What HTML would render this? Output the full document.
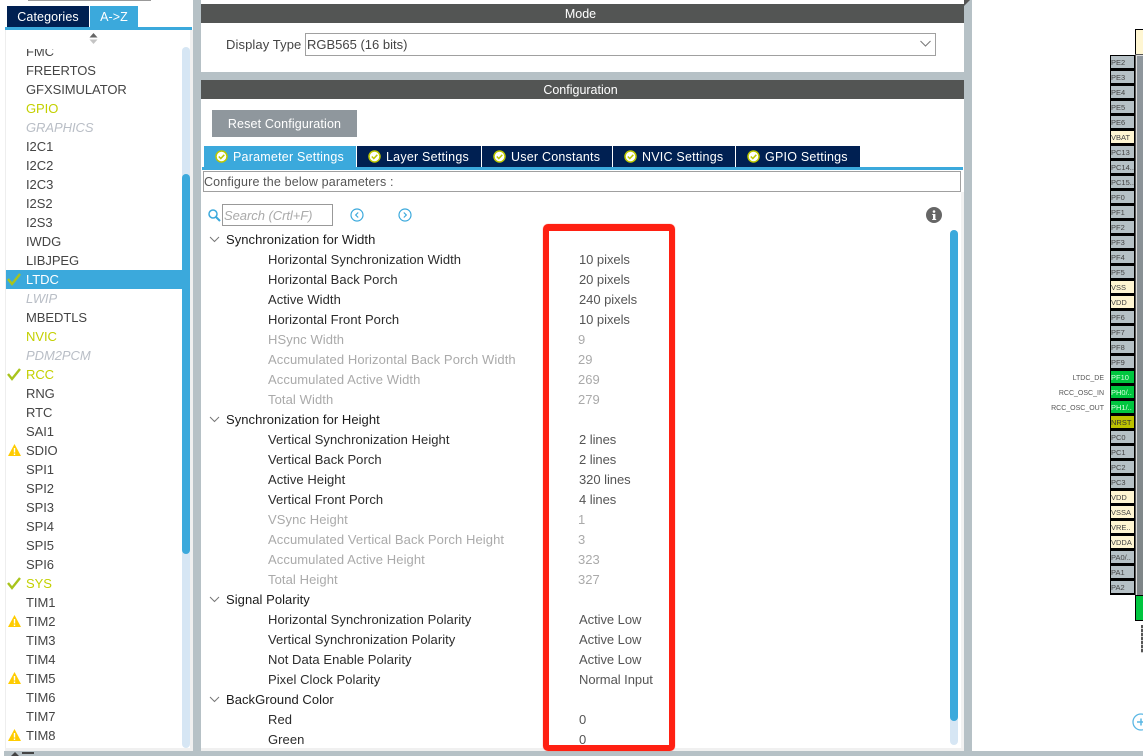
<!DOCTYPE html>
<html><head><meta charset="utf-8"><style>
html,body{margin:0;padding:0}
body{position:relative;width:1143px;height:756px;overflow:hidden;background:#fff;font-family:"Liberation Sans",sans-serif;font-size:13px;color:#333}
div,svg{position:absolute}
.l{left:26px;height:19px;line-height:19px;white-space:pre;color:#444;letter-spacing:-.05px}
.y{color:#c3d000}
.g{color:#b9bec6;font-style:italic}
.h{left:226px;line-height:20px;height:20px;color:#1c1c1c;white-space:pre;letter-spacing:.05px}
.p{left:268px;line-height:20px;height:20px;color:#2c2c2c;white-space:pre;letter-spacing:.05px}
.d{left:268px;line-height:20px;height:20px;color:#aaa;white-space:pre;letter-spacing:.09px}
.v{left:579px;line-height:20px;height:20px;color:#555;white-space:pre;letter-spacing:-.05px}
.w{left:578px;line-height:20px;height:20px;color:#aaa;white-space:pre}
.t{top:146px;height:21px;line-height:22px;background:#002052;color:#fff;white-space:pre;letter-spacing:.22px;font-size:12.5px}
.t span{position:absolute;left:29px;top:0}
.t svg{left:11px;top:4px}
.n{left:1110px;width:23px;height:12px;border:1px solid #000;border-bottom-width:2px;background:#b6c1c6;font-size:7.5px;line-height:14px;color:#444;white-space:pre;overflow:hidden}
.n.c{background:#fff6d2}
.n.e{background:#00c63f;color:#d8ffe0}
.n.o{background:#bdc200;color:#333}
.o1{font-size:7px;color:#555;white-space:pre;text-align:right;right:39px;line-height:10px}
</style></head><body>

<!-- backgrounds -->
<div style="left:193px;top:0;width:8px;height:756px;background:#b6c1c6"></div>
<div style="left:964px;top:0;width:8px;height:756px;background:#b6c1c6"></div>
<div style="left:4px;top:751px;width:1139px;height:5px;background:#b6c1c6"></div>
<div style="left:201px;top:72px;width:763px;height:8px;background:#b6c1c6"></div>
<div style="left:28px;top:0;width:123px;height:1px;background:#999"></div>

<!-- left panel -->
<div style="left:5px;top:30px;width:1px;height:721px;background:#eee"></div>
<div style="left:190px;top:30px;width:3px;height:721px;background:#f0f0f0"></div>
<div style="left:5px;top:748px;width:188px;height:3px;background:#f0f0f0"></div>
<div style="left:7px;top:6px;width:82px;height:21px;background:#002052;color:#fff;line-height:22px;text-align:center;font-size:12.5px;letter-spacing:.1px">Categories</div>
<div style="left:90px;top:6px;width:48px;height:21px;background:#3ba9dc;color:#fff;line-height:22px;text-align:center;font-size:12.5px;letter-spacing:.1px">A-&gt;Z</div>
<div style="left:5px;top:27px;width:187px;height:3px;background:#3ba9dc"></div>
<svg style="left:88px;top:32px" width="12" height="13"><path d="M1.500 5.500L5.500 1L9.500 5.500Z" fill="#666"/><path d="M1.500 7.500L5.500 12L9.500 7.500Z" fill="#c4c4c4"/></svg>
<div style="left:182px;top:47px;width:8px;height:701px;background:#d6e6f4;border-radius:4px"></div>
<div style="left:182px;top:174px;width:8px;height:380px;background:#3ba9dc;border-radius:4px"></div>
<div style="left:6px;top:270px;width:176px;height:19px;background:#3ba9dc"></div>
<div style="left:6px;top:49px;width:176px;height:699px;overflow:hidden">
<div style="left:-6px;top:-49px;width:188px;height:760px">
<div class="l" style="top:42px">FMC</div>
<div class="l" style="top:61px">FREERTOS</div>
<div class="l" style="top:80px">GFXSIMULATOR</div>
<div class="l y" style="top:99px">GPIO</div>
<div class="l g" style="top:118px">GRAPHICS</div>
<div class="l" style="top:137px">I2C1</div>
<div class="l" style="top:156px">I2C2</div>
<div class="l" style="top:175px">I2C3</div>
<div class="l" style="top:194px">I2S2</div>
<div class="l" style="top:213px">I2S3</div>
<div class="l" style="top:232px">IWDG</div>
<div class="l" style="top:251px">LIBJPEG</div>
<div class="l" style="top:270px;color:#fff">LTDC</div>
<div class="l g" style="top:289px">LWIP</div>
<div class="l" style="top:308px">MBEDTLS</div>
<div class="l y" style="top:327px">NVIC</div>
<div class="l g" style="top:346px">PDM2PCM</div>
<div class="l y" style="top:365px">RCC</div>
<div class="l" style="top:384px">RNG</div>
<div class="l" style="top:403px">RTC</div>
<div class="l" style="top:422px">SAI1</div>
<div class="l" style="top:441px">SDIO</div>
<div class="l" style="top:460px">SPI1</div>
<div class="l" style="top:479px">SPI2</div>
<div class="l" style="top:498px">SPI3</div>
<div class="l" style="top:517px">SPI4</div>
<div class="l" style="top:536px">SPI5</div>
<div class="l" style="top:555px">SPI6</div>
<div class="l y" style="top:574px">SYS</div>
<div class="l" style="top:593px">TIM1</div>
<div class="l" style="top:612px">TIM2</div>
<div class="l" style="top:631px">TIM3</div>
<div class="l" style="top:650px">TIM4</div>
<div class="l" style="top:669px">TIM5</div>
<div class="l" style="top:688px">TIM6</div>
<div class="l" style="top:707px">TIM7</div>
<div class="l" style="top:726px">TIM8</div>
</div></div>
<svg style="left:0;top:0;pointer-events:none" width="26" height="756">
<g fill="none" stroke="#a9c41c" stroke-width="2.400"><path d="M8 279L12 284L20 274"/><path d="M8 374L12 379L20 369"/><path d="M8 583L12 588L20 578"/></g>
<g fill="#fc0"><path d="M14.500 444L21 456H8Z"/><path d="M14.500 615L21 627H8Z"/><path d="M14.500 672L21 684H8Z"/><path d="M14.500 729L21 741H8Z"/></g>
<g stroke="#fff" stroke-width="1.400"><path d="M14.500 448V452.500M14.500 453.500V455"/><path d="M14.500 619V623.500M14.500 624.500V626"/><path d="M14.500 676V680.500M14.500 681.500V683"/><path d="M14.500 733V737.500M14.500 738.500V740"/></g>
</svg>
<svg style="left:8px;top:751px" width="30" height="5"><path d="M3 5L7 1L11 5Z" fill="#444"/><rect x="14" y="1" width="12" height="2" fill="#444"/></svg>

<!-- Mode -->
<div style="left:201px;top:4px;width:763px;height:19px;background:#535554"></div>
<div style="left:201px;top:4px;width:759px;height:19px;color:#fff;text-align:center;line-height:20px;font-size:12.5px">Mode</div>
<div style="left:226px;top:35px;line-height:20px;color:#444;letter-spacing:.1px;white-space:pre">Display Type</div>
<div style="left:305px;top:33px;width:629px;height:21px;border:1px solid #a0a0a0;background:#fff"></div>
<div style="left:307px;top:35px;line-height:20px;color:#444;white-space:pre">RGB565 (16 bits)</div>
<svg style="left:919px;top:39px" width="14" height="10"><path d="M1.500 2L6.500 7L11.500 2" fill="none" stroke="#777" stroke-width="1"/></svg>
<svg style="left:964px;top:0" width="8" height="6"><path d="M0 0H6L0 6Z" fill="#555"/></svg>

<!-- Configuration -->
<div style="left:201px;top:80px;width:763px;height:19px;background:#535554"></div>
<div style="left:201px;top:80px;width:759px;height:19px;color:#fff;text-align:center;line-height:20px;font-size:12.5px">Configuration</div>
<div style="left:212px;top:110px;width:145px;height:27px;background:#8f979d;color:#fff;text-align:center;line-height:28px;font-size:12.5px;letter-spacing:.15px">Reset Configuration</div>

<div class="t" style="left:204px;width:152px;background:#3ba9dc"><svg width="13" height="13"><circle cx="6.500" cy="6.500" r="5.500" fill="#fff" stroke="#bdc800" stroke-width="1.500"/><path d="M3.800 6.500L5.800 8.500L9.300 4.800" fill="none" stroke="#bdc800" stroke-width="1.500"/></svg><span>Parameter Settings</span></div>
<div class="t" style="left:357px;width:124px"><svg width="13" height="13"><circle cx="6.500" cy="6.500" r="5.500" fill="#fff" stroke="#bdc800" stroke-width="1.500"/><path d="M3.800 6.500L5.800 8.500L9.300 4.800" fill="none" stroke="#bdc800" stroke-width="1.500"/></svg><span>Layer Settings</span></div>
<div class="t" style="left:482px;width:130px"><svg width="13" height="13"><circle cx="6.500" cy="6.500" r="5.500" fill="#fff" stroke="#bdc800" stroke-width="1.500"/><path d="M3.800 6.500L5.800 8.500L9.300 4.800" fill="none" stroke="#bdc800" stroke-width="1.500"/></svg><span>User Constants</span></div>
<div class="t" style="left:613px;width:122px"><svg width="13" height="13"><circle cx="6.500" cy="6.500" r="5.500" fill="#fff" stroke="#bdc800" stroke-width="1.500"/><path d="M3.800 6.500L5.800 8.500L9.300 4.800" fill="none" stroke="#bdc800" stroke-width="1.500"/></svg><span>NVIC Settings</span></div>
<div class="t" style="left:736px;width:124px"><svg width="13" height="13"><circle cx="6.500" cy="6.500" r="5.500" fill="#fff" stroke="#bdc800" stroke-width="1.500"/><path d="M3.800 6.500L5.800 8.500L9.300 4.800" fill="none" stroke="#bdc800" stroke-width="1.500"/></svg><span>GPIO Settings</span></div>
<div style="left:202px;top:167px;width:761px;height:3px;background:#3ba9dc"></div>
<div style="left:203px;top:171px;width:756px;height:19px;border:1px solid #a0a0a0;line-height:20px;color:#555;letter-spacing:.15px;font-size:12.5px;white-space:pre">Configure the below parameters :</div>
<div style="left:961px;top:192px;width:3px;height:559px;background:#f2f2f2"></div>
<div style="left:201px;top:748px;width:763px;height:3px;background:#f0f0f0"></div>

<svg style="left:207px;top:208px" width="15" height="15"><circle cx="6" cy="6" r="4" fill="none" stroke="#3ba9dc" stroke-width="1.500"/><path d="M9 9L13 13" stroke="#3ba9dc" stroke-width="2"/></svg>
<div style="left:222px;top:204px;width:109px;height:20px;border:1px solid #999"></div>
<div style="left:224px;top:206px;line-height:20px;color:#aaa;font-style:italic;white-space:pre;letter-spacing:-.05px">Search (Crtl+F)</div>
<svg style="left:350px;top:208px" width="14" height="14"><circle cx="7" cy="7" r="6" fill="none" stroke="#3ba9dc" stroke-width="1.200"/><path d="M8.200 4.500L5.700 7L8.200 9.500" fill="none" stroke="#3ba9dc" stroke-width="1.200"/></svg>
<svg style="left:398px;top:208px" width="14" height="14"><circle cx="7" cy="7" r="6" fill="none" stroke="#3ba9dc" stroke-width="1.200"/><path d="M5.800 4.500L8.300 7L5.800 9.500" fill="none" stroke="#3ba9dc" stroke-width="1.200"/></svg>
<svg style="left:926px;top:207px" width="16" height="16"><circle cx="8" cy="8" r="8" fill="#666"/><rect x="7" y="7" width="2.400" height="5.500" fill="#fff"/><rect x="6.200" y="7" width="2" height="1" fill="#fff"/><rect x="6.200" y="12" width="4" height="1" fill="#fff"/><circle cx="8" cy="4.500" r="1.300" fill="#fff"/></svg>

<div style="left:950px;top:230px;width:8px;height:515px;background:#d6e6f4;border-radius:4px"></div>
<div style="left:950px;top:230px;width:8px;height:491px;background:#3ba9dc;border-radius:4px"></div>

<!-- chevrons -->
<svg style="left:207px;top:230px" width="14" height="480"><g fill="none" stroke="#777" stroke-width="1"><path d="M3 7L7.500 11.500L12 7"/><path d="M3 187L7.500 191.500L12 187"/><path d="M3 367L7.500 371.500L12 367"/><path d="M3 467L7.500 471.500L12 467"/></g></svg>

<!-- params -->
<div style="left:201px;top:229px;width:749px;height:519px;overflow:hidden"><div style="left:-201px;top:-228px;width:800px;height:760px">
<div class="h" style="top:229px">Synchronization for Width</div>
<div class="p" style="top:249px">Horizontal Synchronization Width</div><div class="v" style="top:249px">10 pixels</div>
<div class="p" style="top:269px">Horizontal Back Porch</div><div class="v" style="top:269px">20 pixels</div>
<div class="p" style="top:289px">Active Width</div><div class="v" style="top:289px">240 pixels</div>
<div class="p" style="top:309px">Horizontal Front Porch</div><div class="v" style="top:309px">10 pixels</div>
<div class="d" style="top:329px">HSync Width</div><div class="w" style="top:329px">9</div>
<div class="d" style="top:349px">Accumulated Horizontal Back Porch Width</div><div class="w" style="top:349px">29</div>
<div class="d" style="top:369px">Accumulated Active Width</div><div class="w" style="top:369px">269</div>
<div class="d" style="top:389px">Total Width</div><div class="w" style="top:389px">279</div>
<div class="h" style="top:409px">Synchronization for Height</div>
<div class="p" style="top:429px">Vertical Synchronization Height</div><div class="v" style="top:429px">2 lines</div>
<div class="p" style="top:449px">Vertical Back Porch</div><div class="v" style="top:449px">2 lines</div>
<div class="p" style="top:469px">Active Height</div><div class="v" style="top:469px">320 lines</div>
<div class="p" style="top:489px">Vertical Front Porch</div><div class="v" style="top:489px">4 lines</div>
<div class="d" style="top:509px">VSync Height</div><div class="w" style="top:509px">1</div>
<div class="d" style="top:529px">Accumulated Vertical Back Porch Height</div><div class="w" style="top:529px">3</div>
<div class="d" style="top:549px">Accumulated Active Height</div><div class="w" style="top:549px">323</div>
<div class="d" style="top:569px">Total Height</div><div class="w" style="top:569px">327</div>
<div class="h" style="top:589px">Signal Polarity</div>
<div class="p" style="top:609px">Horizontal Synchronization Polarity</div><div class="v" style="top:609px">Active Low</div>
<div class="p" style="top:629px">Vertical Synchronization Polarity</div><div class="v" style="top:629px">Active Low</div>
<div class="p" style="top:649px">Not Data Enable Polarity</div><div class="v" style="top:649px">Active Low</div>
<div class="p" style="top:669px">Pixel Clock Polarity</div><div class="v" style="top:669px">Normal Input</div>
<div class="h" style="top:689px">BackGround Color</div>
<div class="p" style="top:709px">Red</div><div class="v" style="top:709px">0</div>
<div class="p" style="top:729px">Green</div><div class="v" style="top:729px">0</div>
</div></div>

<!-- red highlight -->
<div style="left:543px;top:224px;width:120px;height:514px;border:6px solid #ff2012;border-width:7px 6px 6px 6px;border-radius:5px;box-shadow:0 0 1px #ff7060"></div>

<!-- chip -->
<div style="left:1135px;top:29px;width:8px;height:24px;background:#fff6d2;border:1px solid #000;border-right:0"></div>
<div style="left:1135px;top:54px;width:8px;height:540px;background:linear-gradient(#8f979d,#7e8587);border:1px solid #555;border-right:0;box-shadow:inset 1px 1px 0 #ddd"></div>
<div style="left:1135px;top:595px;width:8px;height:24px;background:#00c63f;border:1px solid #000;border-right:0"></div>
<div style="left:1141px;top:625px;width:2px;height:28px;background:repeating-linear-gradient(#555 0 3px,#ccc 3px 4px)"></div>
<svg style="left:1131px;top:713px" width="12" height="18"><circle cx="10" cy="9" r="8" fill="none" stroke="#5ab7e4" stroke-width="1.300"/><path d="M6 9H12M10 5.500V12.500" stroke="#5ab7e4" stroke-width="1.500"/></svg>
<div class="n" style="top:55px">PE2</div>
<div class="n" style="top:70px">PE3</div>
<div class="n" style="top:85px">PE4</div>
<div class="n" style="top:100px">PE5</div>
<div class="n" style="top:115px">PE6</div>
<div class="n c" style="top:130px">VBAT</div>
<div class="n" style="top:145px">PC13</div>
<div class="n" style="top:160px">PC14..</div>
<div class="n" style="top:175px">PC15..</div>
<div class="n" style="top:190px">PF0</div>
<div class="n" style="top:205px">PF1</div>
<div class="n" style="top:220px">PF2</div>
<div class="n" style="top:235px">PF3</div>
<div class="n" style="top:250px">PF4</div>
<div class="n" style="top:265px">PF5</div>
<div class="n c" style="top:280px">VSS</div>
<div class="n c" style="top:295px">VDD</div>
<div class="n" style="top:310px">PF6</div>
<div class="n" style="top:325px">PF7</div>
<div class="n" style="top:340px">PF8</div>
<div class="n" style="top:355px">PF9</div>
<div class="n e" style="top:370px">PF10</div>
<div class="n e" style="top:385px">PH0/..</div>
<div class="n e" style="top:400px">PH1/..</div>
<div class="n o" style="top:415px">NRST</div>
<div class="n" style="top:430px">PC0</div>
<div class="n" style="top:445px">PC1</div>
<div class="n" style="top:460px">PC2</div>
<div class="n" style="top:475px">PC3</div>
<div class="n c" style="top:490px">VDD</div>
<div class="n c" style="top:505px">VSSA</div>
<div class="n c" style="top:520px">VRE..</div>
<div class="n c" style="top:535px">VDDA</div>
<div class="n" style="top:550px">PA0/..</div>
<div class="n" style="top:565px">PA1</div>
<div class="n" style="top:580px">PA2</div>
<div class="o1" style="top:374px">LTDC_DE</div>
<div class="o1" style="top:389px">RCC_OSC_IN</div>
<div class="o1" style="top:404px">RCC_OSC_OUT</div>
</body></html>
